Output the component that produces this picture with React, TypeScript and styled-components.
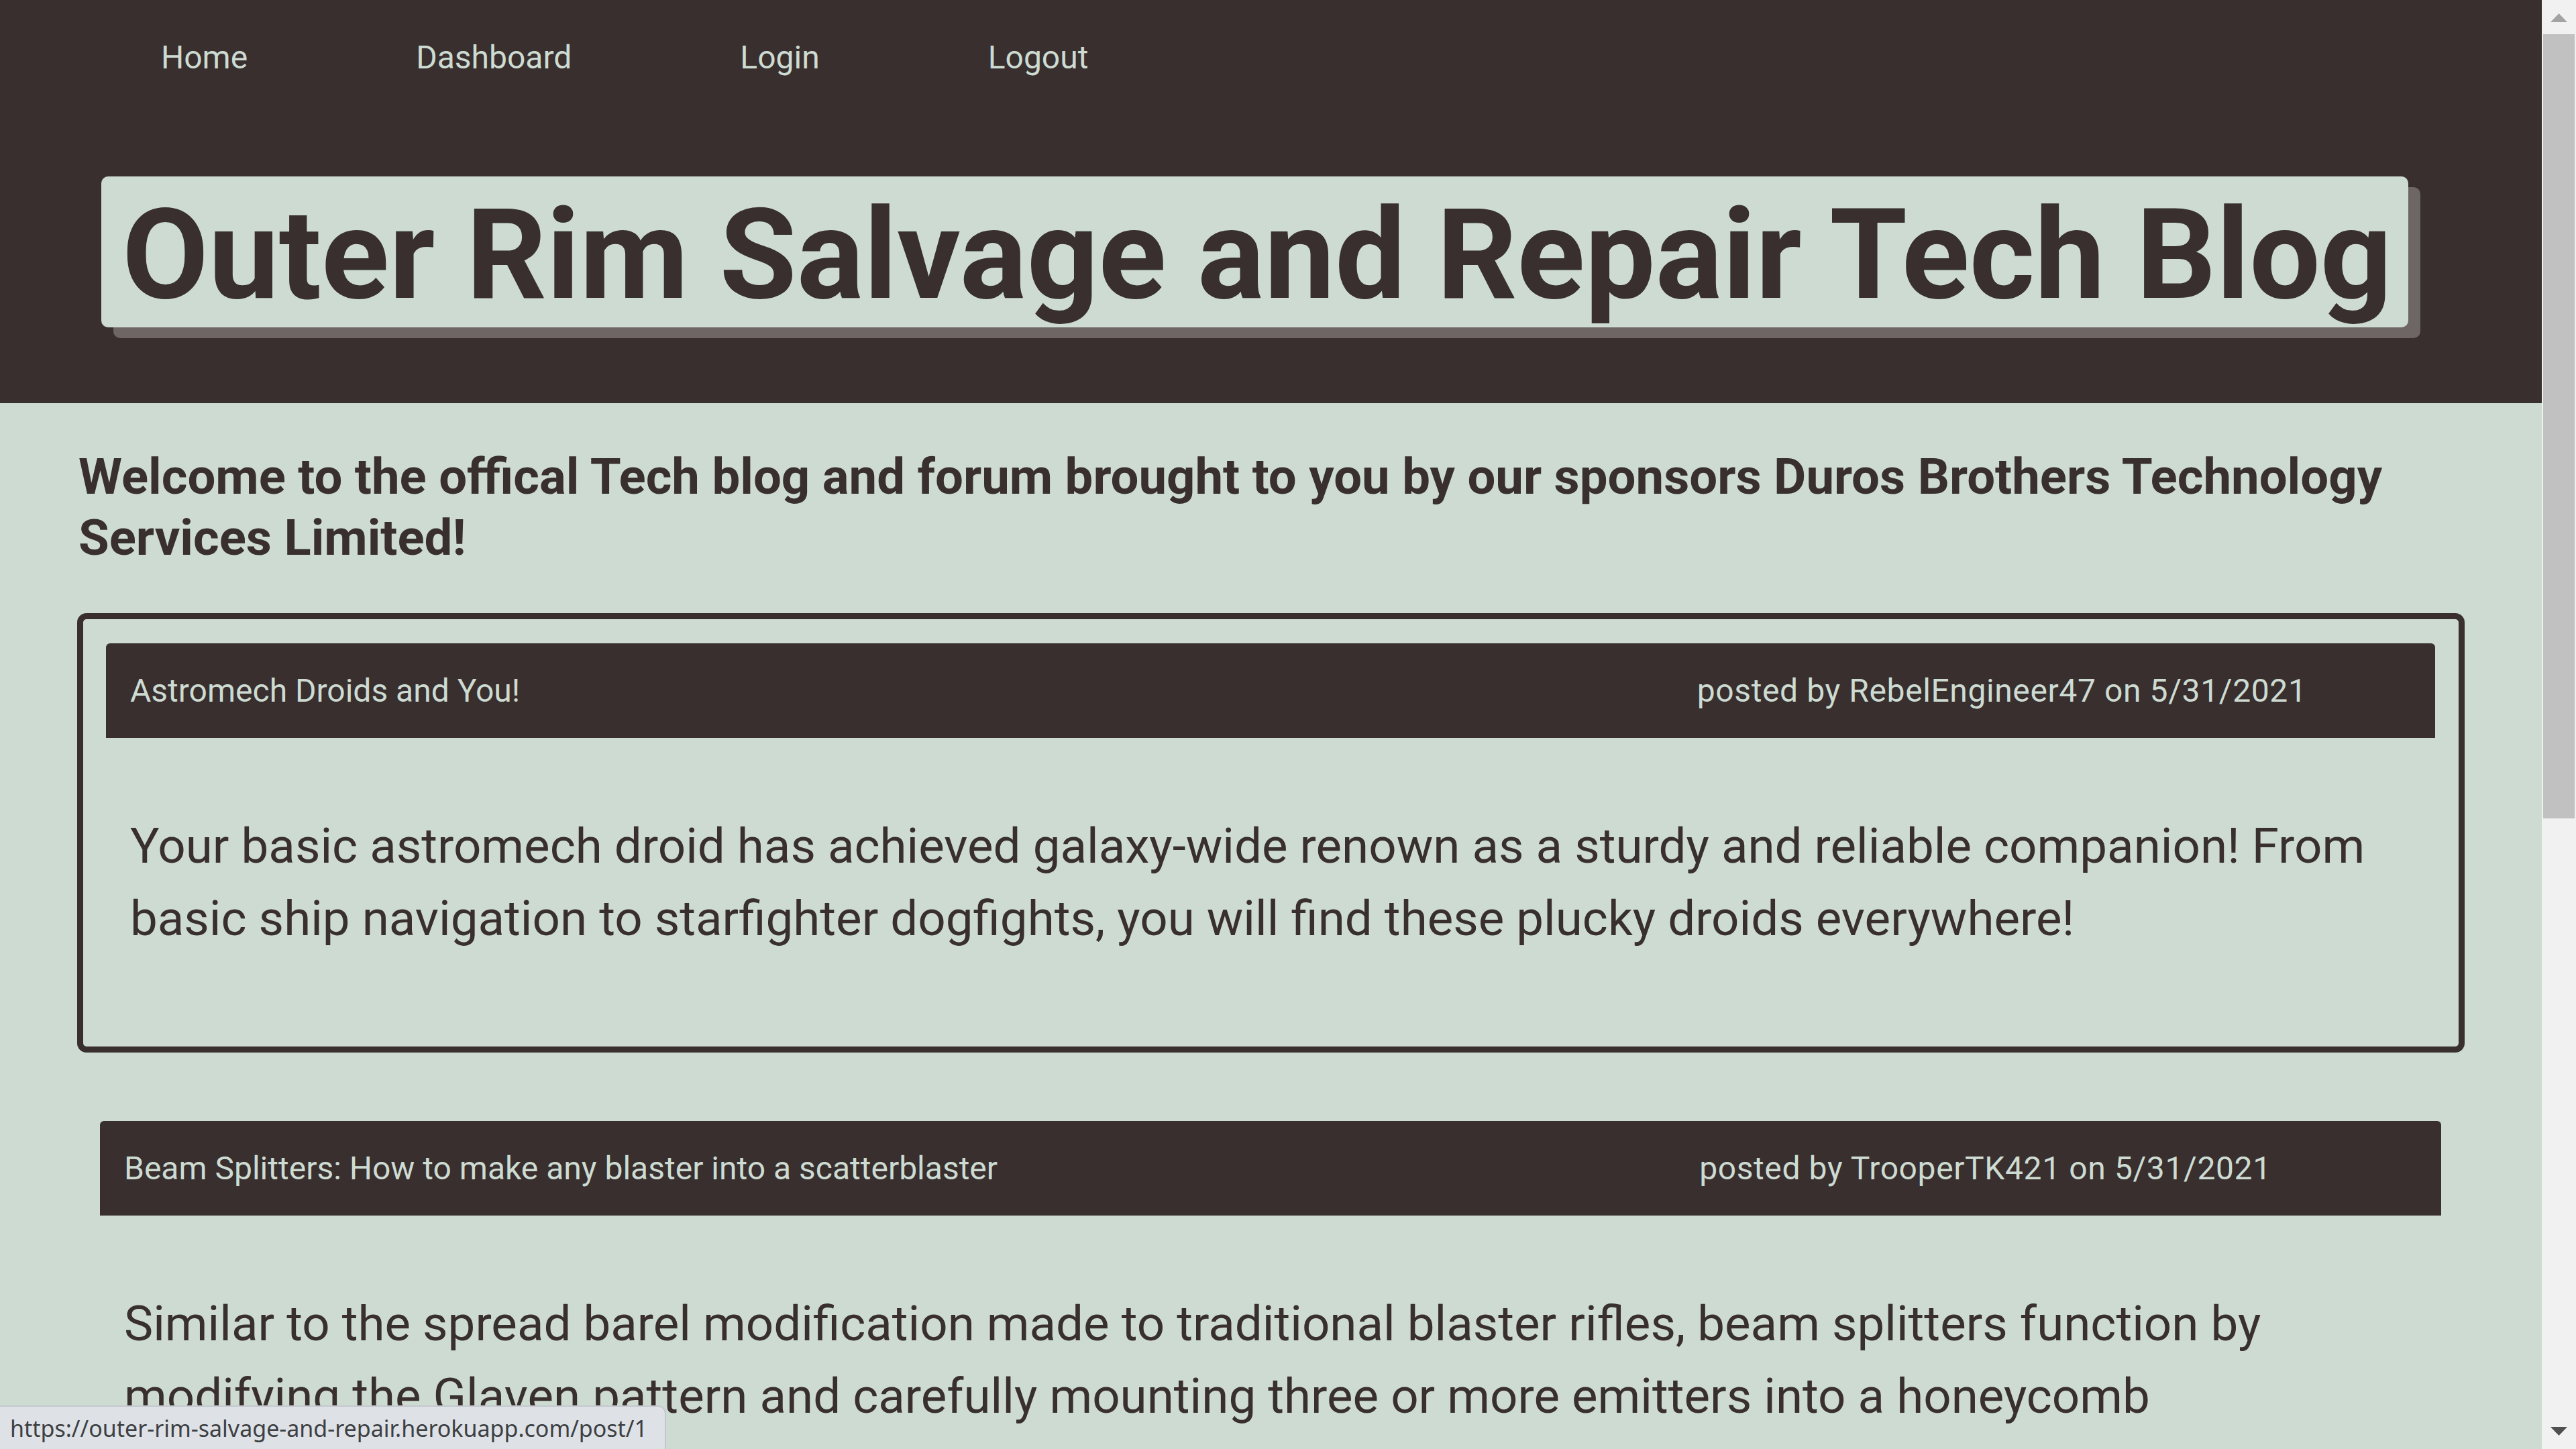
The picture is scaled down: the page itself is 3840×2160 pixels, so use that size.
import React from "react";
import styled, { createGlobalStyle, css } from "styled-components";

const DARK = "#382f2e";
const LIGHT = "#cddbd2";
const SHADOW = "#6e6664";

const GlobalStyle = createGlobalStyle`
  html, body {
    margin: 0;
    padding: 0;
    height: 100%;
    overflow: hidden;
    background: ${LIGHT};
  }
  #root { height: 100%; }
  * { box-sizing: border-box; }
`;

const Shell = styled.div`
  display: flex;
  height: 100vh;
  width: 100%;
`;

const Viewport = styled.div`
  flex: 1;
  min-width: 0;
  height: 100%;
  overflow: hidden;
  background: ${LIGHT};
  color: ${DARK};
  font-family: Roboto, "Liberation Sans", sans-serif;
`;

const ScrollTrack = styled.div`
  width: 51px;
  flex: none;
  display: flex;
  flex-direction: column;
  background: #f1f1f1;
`;

const ScrollButton = styled.div`
  height: 51px;
  flex: none;
  display: flex;
`;

const ScrollThumb = styled.div`
  height: 1169px;
  margin: 0 2px;
  background: #c1c1c1;
`;

const ScrollSpacer = styled.div`
  flex: 1;
`;

const Header = styled.header`
  background: ${DARK};
  padding-bottom: 113px;
`;

const Nav = styled.nav`
  height: 172px;
  display: flex;
  align-items: center;
  gap: 251px;
  padding-left: 240px;
`;

const NavLink = styled.a`
  color: ${LIGHT};
  text-decoration: none;
  font-size: 48px;
  font-weight: 400;
  line-height: 1;
`;

const TitleRow = styled.div`
  margin-top: 91px;
  padding-left: 151px;
`;

const Title = styled.h1`
  display: inline-block;
  margin: 0;
  padding: 10px 24px 0 31px;
  background: ${LIGHT};
  color: ${DARK};
  border-radius: 10px;
  box-shadow: 18px 16px 0 ${SHADOW};
  font-size: 187px;
  font-weight: 700;
  line-height: 215px;
  white-space: nowrap;
`;

const Main = styled.main`
  padding: 0 115px;
`;

const Welcome = styled.h2`
  margin: 64px 0 67px 2px;
  font-size: 74.3px;
  font-weight: 700;
  line-height: 91px;
`;

const PostCard = styled.article<{ $active?: boolean }>`
  padding: 36px 35px 32px 34px;
  margin-bottom: 66px;
  border-radius: 14px;
  ${(p) =>
    p.$active &&
    css`
      border: 9px solid ${DARK};
    `}
`;

const PostBar = styled.div`
  display: grid;
  grid-template-columns: 68.7% auto;
  align-items: center;
  height: 141px;
  padding: 0 36px;
  background: ${DARK};
  color: ${LIGHT};
  border-radius: 6px 6px 0 0;
  font-size: 48px;
  line-height: 1.2;
`;

const PostTitle = styled.span``;

const PostMeta = styled.span`
  white-space: nowrap;
  letter-spacing: 0.6px;
`;

const PostBody = styled.p`
  margin: 0;
  padding: 108px 36px 104px;
  font-size: 72.7px;
  line-height: 108px;
  font-weight: 400;
`;

const StatusBubble = styled.div`
  position: fixed;
  left: 0;
  bottom: 0;
  height: 65px;
  padding: 0 26px 0 15px;
  display: flex;
  align-items: center;
  background: #dee1e6;
  color: #3c4043;
  border-top: 2px solid #c4c8cc;
  border-right: 2px solid #c4c8cc;
  border-top-right-radius: 12px;
  font-family: "Noto Sans", "Open Sans", sans-serif;
  font-size: 34px;
`;

type Post = {
  title: string;
  author: string;
  date: string;
  body: string;
  active?: boolean;
};

const posts: Post[] = [
  {
    title: "Astromech Droids and You!",
    author: "RebelEngineer47",
    date: "5/31/2021",
    body:
      "Your basic astromech droid has achieved galaxy-wide renown as a sturdy and reliable companion! From basic ship navigation to starfighter dogfights, you will find these plucky droids everywhere!",
    active: true,
  },
  {
    title: "Beam Splitters: How to make any blaster into a scatterblaster",
    author: "TrooperTK421",
    date: "5/31/2021",
    body:
      "Similar to the spread barel modification made to traditional blaster rifles, beam splitters function by modifying the Glaven pattern and carefully mounting three or more emitters into a honeycomb arrangement.",
  },
];

export default function App() {
  return (
    <>
      <GlobalStyle />
      <Shell>
        <Viewport>
          <Header>
            <Nav>
              <NavLink href="#">Home</NavLink>
              <NavLink href="#">Dashboard</NavLink>
              <NavLink href="#">Login</NavLink>
              <NavLink href="#">Logout</NavLink>
            </Nav>
            <TitleRow>
              <Title>Outer Rim Salvage and Repair Tech Blog</Title>
            </TitleRow>
          </Header>
          <Main>
            <Welcome>
              Welcome to the offical Tech blog and forum brought to you by our sponsors Duros
              Brothers Technology Services Limited!
            </Welcome>
            {posts.map((post) => (
              <PostCard key={post.title} $active={post.active}>
                <PostBar>
                  <PostTitle>{post.title}</PostTitle>
                  <PostMeta>
                    posted by {post.author} on {post.date}
                  </PostMeta>
                </PostBar>
                <PostBody>{post.body}</PostBody>
              </PostCard>
            ))}
          </Main>
        </Viewport>
        <ScrollTrack>
          <ScrollButton>
            <svg width="51" height="51" viewBox="0 0 51 51">
              <polygon points="13,33 25.5,20 38,33" fill="#a3a3a3" />
            </svg>
          </ScrollButton>
          <ScrollThumb />
          <ScrollSpacer />
          <ScrollButton>
            <svg width="51" height="51" viewBox="0 0 51 51">
              <polygon points="13,18 38,18 25.5,31" fill="#505050" />
            </svg>
          </ScrollButton>
        </ScrollTrack>
      </Shell>
      <StatusBubble>https://outer-rim-salvage-and-repair.herokuapp.com/post/1</StatusBubble>
    </>
  );
}
